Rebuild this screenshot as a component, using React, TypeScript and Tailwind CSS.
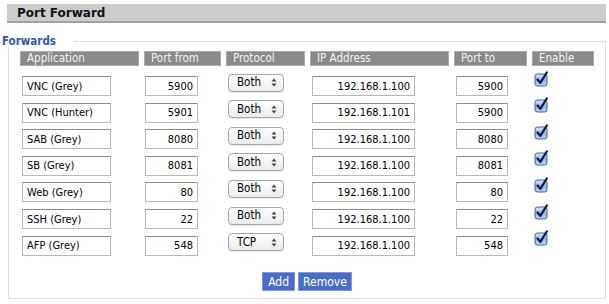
import React from 'react';

type Row = { app: string; from: string; proto: string; ip: string; to: string };

const ROWS: Row[] = [
  { app: 'VNC (Grey)', from: '5900', proto: 'Both', ip: '192.168.1.100', to: '5900' },
  { app: 'VNC (Hunter)', from: '5901', proto: 'Both', ip: '192.168.1.101', to: '5900' },
  { app: 'SAB (Grey)', from: '8080', proto: 'Both', ip: '192.168.1.100', to: '8080' },
  { app: 'SB (Grey)', from: '8081', proto: 'Both', ip: '192.168.1.100', to: '8081' },
  { app: 'Web (Grey)', from: '80', proto: 'Both', ip: '192.168.1.100', to: '80' },
  { app: 'SSH (Grey)', from: '22', proto: 'Both', ip: '192.168.1.100', to: '22' },
  { app: 'AFP (Grey)', from: '548', proto: 'TCP', ip: '192.168.1.100', to: '548' },
];

const HEADERS = ['Application', 'Port from', 'Protocol', 'IP Address', 'Port to', 'Enable'];

const FONT = "font-['DejaVu_Sans_Condensed','Liberation_Sans',sans-serif]";

const TextBox: React.FC<{ value: string; width: string; right?: boolean }> = ({ value, width, right }) => (
  <input
    readOnly
    value={value}
    className={`${width} h-[20px] border border-[#b8b8b8] border-t-[#8c8c8c] bg-white px-[4px] text-[11px] text-black outline-none ${right ? 'text-right' : 'text-left'}`}
  />
);

const Popup: React.FC<{ value: string }> = ({ value }) => (
  <div className="w-[56px] h-[18px] mt-[1px] rounded-[4px] border border-[#a6a6a6] bg-gradient-to-b from-white to-[#ececec] shadow-[0_1px_0_rgba(0,0,0,0.08)] flex items-center justify-between pl-[8px] pr-[6px]">
    <span className="text-[11.5px] font-medium text-black font-['DejaVu_Sans_Condensed','Liberation_Sans',sans-serif]">{value}</span>
    <svg width="6" height="9" viewBox="0 0 6 9">
      <path d="M3 0.5 L5.5 3.5 L0.5 3.5 Z" fill="#444" />
      <path d="M3 8.5 L5.5 5.5 L0.5 5.5 Z" fill="#444" />
    </svg>
  </div>
);

const CheckBox: React.FC = () => (
  <svg width="15" height="16" viewBox="0 0 15 16" className="ml-[2px]">
    <defs>
      <linearGradient id="cbFill" x1="0" y1="0" x2="0" y2="1">
        <stop offset="0" stopColor="#d6e6fa" />
        <stop offset="0.5" stopColor="#8fb7ec" />
        <stop offset="1" stopColor="#b9d4f5" />
      </linearGradient>
    </defs>
    <rect x="1" y="3" width="12" height="12" rx="2.5" fill="url(#cbFill)" stroke="#41609a" strokeWidth="1" />
    <path d="M3.5 8.5 L6.3 11.8 L12.8 1.5" fill="none" stroke="#14183a" strokeWidth="2.2" strokeLinecap="round" strokeLinejoin="round" />
  </svg>
);

export default function App() {
  return (
    <div className={`w-[609px] h-[304px] bg-white overflow-hidden ${FONT}`}>
      {/* title bar */}
      <div className="pt-[4px] pl-[7px] pr-[3px]">
        <div className="h-[19px] bg-[#cccccc] border-b-2 border-[#a2a2a2] pl-[10px] flex items-center">
          <span className="text-[12px] font-bold text-[#111] font-['DejaVu_Sans',sans-serif]">Port Forward</span>
        </div>
      </div>

      {/* legend row */}
      <div className="mt-[12px] h-[12px] flex items-start pr-[3px]">
        <span className="ml-[2px] text-[11.5px] leading-[12px] font-bold text-[#2f5aa6]">Forwards</span>
        <div className="ml-[18px] flex-1 mt-[6px] h-[6px] border-t border-r border-[#dedede]" />
      </div>

      {/* fieldset body */}
      <div className="ml-[8px] mr-[3px] border-l border-r border-b border-[#dedede] pt-[4px] pb-[7px] pl-[11px]">
        <div className="grid grid-cols-[119px_77px_79px_139px_73px_62px] gap-x-[5px] gap-y-[6.6px] grid-rows-[15px]">
          {HEADERS.map((h) => (
            <div
              key={h}
              className="h-[15px] bg-[#8a8a8a] border border-[#aaaaaa] pl-[6px] flex items-center text-[11.5px] text-[#f4f4f4]"
            >
              {h}
            </div>
          ))}
          {ROWS.map((r) => (
            <React.Fragment key={r.app}>
              <div className="h-[20px] pl-[2px]">
                <TextBox value={r.app} width="w-[89px]" />
              </div>
              <div className="h-[20px] pl-[1px]">
                <TextBox value={r.from} width="w-[53px]" right />
              </div>
              <div className="h-[20px] pl-[2px]">
                <Popup value={r.proto} />
              </div>
              <div className="h-[20px] pl-[2px]">
                <TextBox value={r.ip} width="w-[103px]" right />
              </div>
              <div className="h-[20px] pl-[2px]">
                <TextBox value={r.to} width="w-[52px]" right />
              </div>
              <div className="h-[20px] -mt-[2px]">
                <CheckBox />
              </div>
            </React.Fragment>
          ))}
        </div>

        {/* buttons */}
        <div className="mt-[20px] flex justify-center gap-[3px] pr-[11px]">
          <button className="h-[19px] px-[5px] bg-[#4a6ec8] border border-[#7d9ad9] text-white text-[12px] leading-none">
            Add
          </button>
          <button className="h-[19px] px-[4px] bg-[#4a6ec8] border border-[#7d9ad9] text-white text-[12px] leading-none">
            Remove
          </button>
        </div>
      </div>
    </div>
  );
}
